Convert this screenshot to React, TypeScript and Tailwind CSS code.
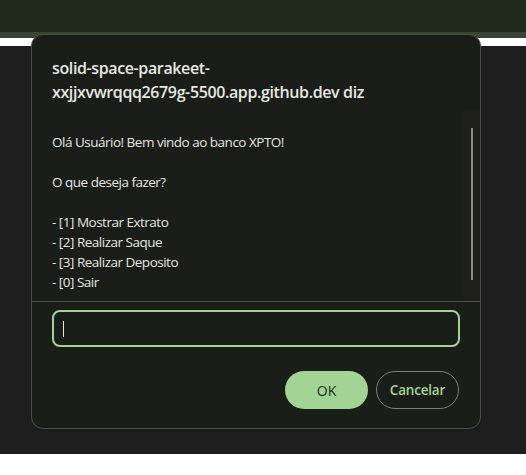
export default function App() {
  const lines = [
    "Olá Usuário! Bem vindo ao banco XPTO!",
    "",
    "O que deseja fazer?",
    "",
    "- [1] Mostrar Extrato",
    "- [2] Realizar Saque",
    "- [3] Realizar Deposito",
    "- [0] Sair",
  ];

  return (
    <div
      className="relative h-[475px] w-[526px] overflow-hidden bg-white"
      style={{ fontFamily: '"Segoe UI", "Open Sans", sans-serif' }}
    >
      {/* page behind the dialog */}
      <div className="h-[32px] bg-[#1f2a1b]" />
      <div className="h-[6px] bg-[#3a4536]" />
      <div className="h-[8px] bg-white" />
      <div className="h-[408px] bg-[#1e1e1e]" />

      {/* prompt dialog */}
      <div className="absolute left-[31px] top-[34px] flex h-[395px] w-[450px] flex-col rounded-[12px] border border-[#4b5047] bg-[#1a1d18]">
        <div className="px-[20px] pt-[21px] text-[16px] font-semibold leading-[24px] tracking-[-0.38px] text-[#e6e8e3]">
          <div>solid-space-parakeet-</div>
          <div>xxjjxvwrqqq2679g-5500.app.github.dev diz</div>
        </div>

        <div className="mt-[7px] flex h-[191px] border-b border-[#4b5047]">
          <div className="flex-1 pl-[20px] pt-[21px] text-[13.5px] leading-[20px] tracking-[-0.5px] text-[#e6e6e3]">
            {lines.map((l, i) => (
              <div key={i} className="h-[20px]">
                {l}
              </div>
            ))}
          </div>
          <div className="flex w-[17px] justify-center bg-[#1e1f1d]">
            <div className="mt-[17px] h-[152px] w-[2px] bg-[#8c8c8c]" />
          </div>
        </div>

        <div className="px-[20px] pt-[8px]">
          <div className="flex h-[37px] items-center rounded-[8px] border-2 border-[#a0d495] pl-[9px]">
            <div className="h-[16px] w-px bg-[#e8e8e8]" />
          </div>
        </div>

        <div className="mt-[24px] flex justify-end gap-[8px] pr-[21px]">
          <button className="flex h-[38px] w-[83px] items-center justify-center rounded-full bg-[#a2d595] text-[14px] text-[#1b2a18]">
            OK
          </button>
          <button className="flex h-[38px] w-[83px] items-center justify-center rounded-full border border-[#7a8073] text-[13.5px] font-semibold tracking-[-0.2px] text-[#a2d595]">
            Cancelar
          </button>
        </div>
      </div>
    </div>
  );
}
